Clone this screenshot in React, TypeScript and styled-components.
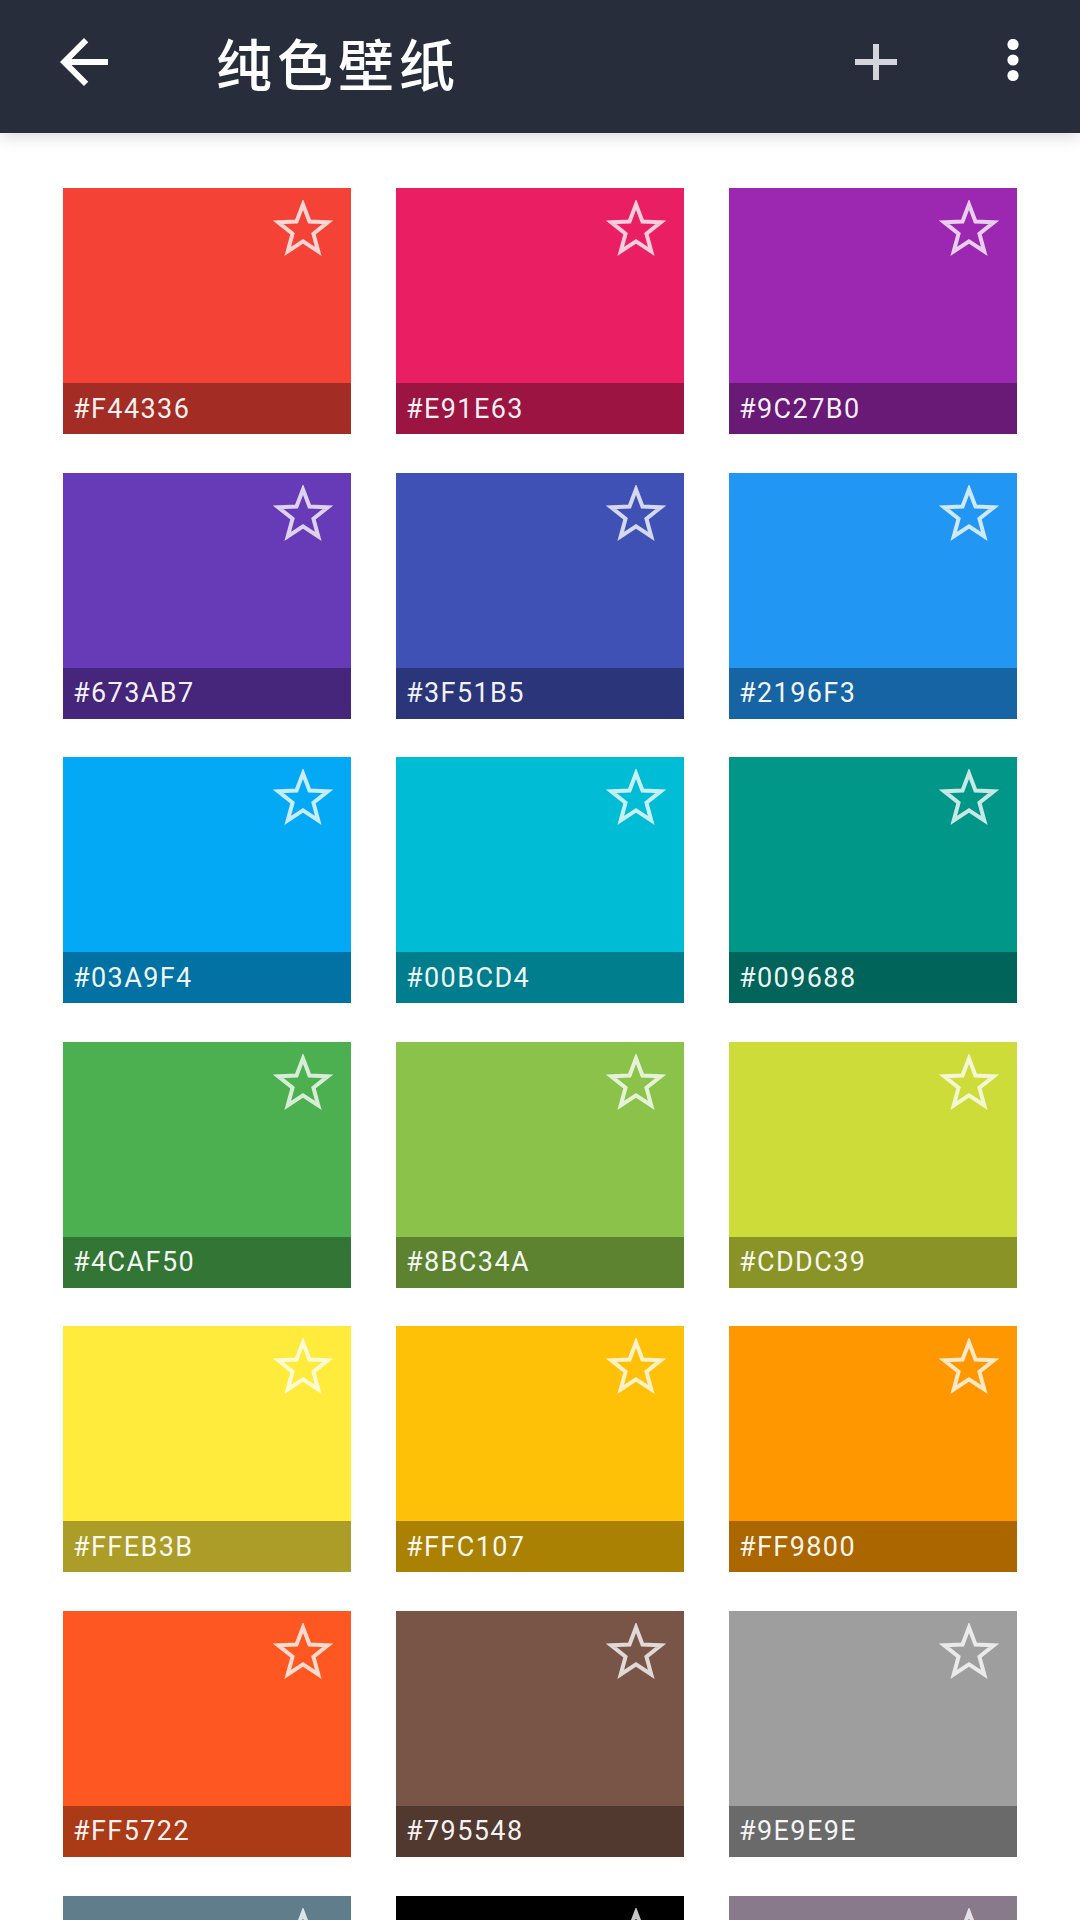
import React from 'react'
import styled, { createGlobalStyle } from 'styled-components'

const GlobalStyle = createGlobalStyle`
  html, body {
    margin: 0;
    padding: 0;
    background: #ffffff;
  }
  * {
    box-sizing: border-box;
  }
`

const COLORS = [
  'F44336', 'E91E63', '9C27B0',
  '673AB7', '3F51B5', '2196F3',
  '03A9F4', '00BCD4', '009688',
  '4CAF50', '8BC34A', 'CDDC39',
  'FFEB3B', 'FFC107', 'FF9800',
  'FF5722', '795548', '9E9E9E',
  '607D8B', '000000', '88798B',
]

const Page = styled.div`
  width: 1080px;
  height: 1920px;
  overflow: hidden;
  background: #ffffff;
  font-family: Roboto, "Noto Sans CJK SC", sans-serif;
`

const TopBar = styled.header`
  position: relative;
  z-index: 2;
  height: 133px;
  background: #282d3c;
  display: flex;
  align-items: center;
  padding: 0 60px 10px 48px;
  box-shadow: 0 5px 14px rgba(0, 0, 0, 0.13);
`

const IconButton = styled.button`
  border: none;
  background: transparent;
  padding: 0;
  margin: 0;
  display: flex;
  align-items: center;
  justify-content: center;
  cursor: pointer;
`

const Title = styled.h1`
  flex: 1;
  margin: 0 0 0 96px;
  color: #ffffff;
  font-family: "Noto Sans CJK SC", sans-serif;
  font-size: 56px;
  font-weight: 500;
  letter-spacing: 5px;
  line-height: 1;
`

const Actions = styled.div`
  display: flex;
  align-items: center;
  gap: 108px;
`

const Grid = styled.main`
  display: grid;
  grid-template-columns: repeat(3, 288px);
  column-gap: 45px;
  row-gap: 38.6px;
  padding: 55px 63px 0;
`

const Swatch = styled.div<{ $color: string }>`
  position: relative;
  height: 246px;
  background: ${p => p.$color};
  display: flex;
  flex-direction: column;
  justify-content: flex-end;
`

const Label = styled.div`
  height: 51px;
  background: rgba(0, 0, 0, 0.33);
  display: flex;
  align-items: center;
  padding-left: 10px;
  color: rgba(255, 255, 255, 0.95);
  font-family: Roboto, sans-serif;
  font-size: 27px;
  letter-spacing: 1.4px;
`

const StarWrap = styled.div`
  position: absolute;
  top: 12px;
  right: 18px;
  width: 60px;
  height: 56px;
`

const BackIcon = () => (
  <svg width="72" height="72" viewBox="0 0 24 24">
    <path d="M20 11H7.83l5.59-5.59L12 4l-8 8 8 8 1.41-1.41L7.83 13H20v-2z" fill="#ffffff" />
  </svg>
)

const PlusIcon = () => (
  <svg width="44" height="40" viewBox="0 0 44 40">
    <rect x="1" y="17" width="42" height="6" fill="#d5d6dc" />
    <rect x="19" y="2" width="6" height="36" fill="#d5d6dc" />
  </svg>
)

const MoreIcon = () => (
  <svg width="14" height="46" viewBox="0 0 14 46">
    <circle cx="7" cy="5.5" r="5.6" fill="#ffffff" />
    <circle cx="7" cy="21" r="5.6" fill="#ffffff" />
    <circle cx="7" cy="36.5" r="5.6" fill="#ffffff" />
  </svg>
)

const starPoints = (() => {
  const cx = 30
  const cy = 30.4
  const outer = 26
  const inner = 11
  const pts: string[] = []
  for (let i = 0; i < 10; i++) {
    const r = i % 2 === 0 ? outer : inner
    const a = -Math.PI / 2 + (i * Math.PI) / 5
    pts.push(`${(cx + r * Math.cos(a)).toFixed(2)},${(cy + r * Math.sin(a)).toFixed(2)}`)
  }
  return pts.join(' ')
})()

const StarIcon = () => (
  <svg width="60" height="56" viewBox="0 0 60 56">
    <polygon
      points={starPoints}
      fill="none"
      stroke="rgba(255,255,255,0.78)"
      strokeWidth="4"
      strokeLinejoin="miter"
    />
  </svg>
)

const App: React.FC = () => {
  return (
    <Page>
      <GlobalStyle />
      <TopBar>
        <IconButton aria-label="back">
          <BackIcon />
        </IconButton>
        <Title>纯色壁纸</Title>
        <Actions>
          <IconButton aria-label="add">
            <PlusIcon />
          </IconButton>
          <IconButton aria-label="more">
            <MoreIcon />
          </IconButton>
        </Actions>
      </TopBar>
      <Grid>
        {COLORS.map(c => (
          <Swatch key={c} $color={`#${c}`}>
            <StarWrap>
              <StarIcon />
            </StarWrap>
            <Label>#{c}</Label>
          </Swatch>
        ))}
      </Grid>
    </Page>
  )
}

export default App
